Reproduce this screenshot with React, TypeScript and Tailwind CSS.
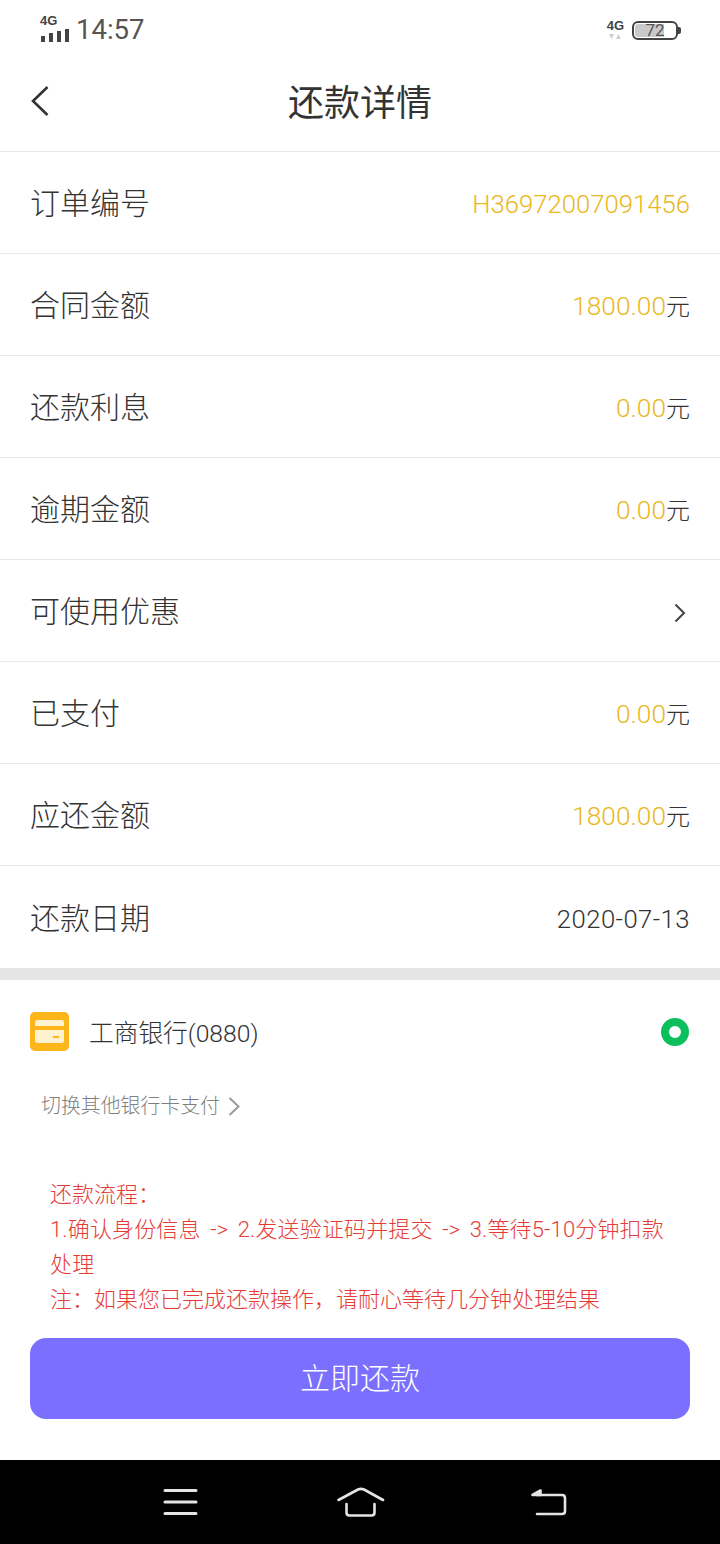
function Y({ children }: { children: React.ReactNode }) {
  return <span className="text-[#eab71a]">{children}</span>;
}
function Row({ label, children }: { label: string; children: React.ReactNode }) {
  return (
    <div className="h-[102px] shrink-0 border-b border-[#e8e8e8] last:border-b-0 flex items-center justify-between pl-[30px] pr-[30px]">
      <span className="text-[30px] text-[#333333] font-light translate-y-[1px]">{label}</span>
      <span className="text-[25.700px] text-[#333333] font-light translate-y-[2px]">{children}</span>
    </div>
  );
}
function Money({ v }: { v: string }) {
  return (
    <span className="flex items-baseline text-[26.300px]">
      <Y>{v}</Y>
      <span className="text-[24px] font-light">元</span>
    </span>
  );
}
export default function App() {
  return (
    <div className="w-[720px] h-[1544px] bg-white flex flex-col overflow-hidden font-['Roboto','Noto_Sans_CJK_SC',sans-serif]">
      <div className="h-[60px] shrink-0 flex items-center justify-between pl-[40px] pr-[39px]">
        <div className="flex items-center gap-[7px] text-[#444]">
          <div className="flex flex-col mt-[-3px]">
            <span className="text-[13px] leading-[12px] font-bold h-[11px] font-['Liberation_Sans',sans-serif]">4G</span>
            <div className="flex items-end gap-[4px] mt-[3px] ml-[1px]">
              <div className="w-[4px] h-[6px] bg-[#444]" />
              <div className="w-[4px] h-[9px] bg-[#444]" />
              <div className="w-[4px] h-[11px] bg-[#444]" />
              <div className="w-[4px] h-[13px] bg-[#444]" />
            </div>
          </div>
          <span className="text-[27.500px] font-normal leading-none text-[#555]">14:57</span>
        </div>
        <div className="flex items-center gap-[8px] text-[#444]">
          <div className="flex flex-col items-center mt-[-2px] ml-[1px]">
            <span className="text-[13px] leading-[13px] font-bold font-['Liberation_Sans',sans-serif]">4G</span>
            <svg width="14" height="7" viewBox="0 0 14 7" className="mt-[1px]"><path d="M1 1h5L3.500 6zM8 6h5l-2.500-5z" fill="#cfcfcf" /></svg>
          </div>
          <div className="flex items-center">
            <div className="w-[46px] h-[19px] rounded-[6px] border-2 border-[#444] p-[1px] relative flex">
              <div className="w-[29px] bg-[#c9c9c9] rounded-l-[3px]" />
              <span className="absolute inset-0 flex items-center justify-center text-[17px] font-normal leading-none text-[#555]">72</span>
            </div>
            <div className="w-[3px] h-[7px] bg-[#444] rounded-r-[2px]" />
          </div>
        </div>
      </div>
      <header className="h-[92px] shrink-0 relative flex items-center justify-center border-b border-[#e8e8e8] pb-[3px]">
        <svg className="absolute left-[30px] top-[25px]" width="20" height="32" viewBox="0 0 20 32" fill="none">
          <path d="M17.500 2 3 16l14.500 14" stroke="#333" strokeWidth="2.600" />
        </svg>
        <h1 className="text-[36px] font-normal text-[#333]">还款详情</h1>
      </header>
      <div className="flex flex-col">
        <Row label="订单编号"><Y>H36972007091456</Y></Row>
        <Row label="合同金额"><Money v="1800.00" /></Row>
        <Row label="还款利息"><Money v="0.00" /></Row>
        <Row label="逾期金额"><Money v="0.00" /></Row>
        <Row label="可使用优惠">
          <svg className="block mr-[4px]" width="12" height="20" viewBox="0 0 12 20" fill="none"><path d="M1.500 1.500 10 10l-8.500 8.500" stroke="#444" strokeWidth="2" /></svg>
        </Row>
        <Row label="已支付"><Money v="0.00" /></Row>
        <Row label="应还金额"><Money v="1800.00" /></Row>
        <Row label="还款日期"><span className="tracking-[0.45px]">2020-07-13</span></Row>
      </div>
      <div className="h-[12px] shrink-0 bg-[#e5e5e5]" />
      <div className="shrink-0 flex items-center pl-[30px] pr-[31px] mt-[32px]">
        <div className="w-[39px] h-[39px] rounded-[5px] bg-[#fcb61a] flex items-center justify-center">
          <svg width="29" height="23" viewBox="0 0 29 23">
            <rect x="0" y="0" width="29" height="23" rx="2.500" fill="#fff3cf" />
            <rect x="0" y="6" width="29" height="4" fill="#fcb61a" />
            <rect x="18" y="16" width="6" height="2" fill="#fcb61a" />
          </svg>
        </div>
        <span className="ml-[20px] text-[24.700px] font-light text-[#333] translate-y-[2px]">工商银行(0880)</span>
        <div className="ml-auto w-[28px] h-[28px] rounded-full border-[8px] border-[#0bbf5d]" />
      </div>
      <div className="flex items-center pl-[41px] h-[34px] mt-[39px] text-[#808080]">
        <span className="text-[19.900px] font-light">切换其他银行卡支付</span>
        <svg className="ml-[8px] mt-[-2px]" width="13" height="19" viewBox="0 0 13 19" fill="none"><path d="M1.500 1 10.500 9.500l-9 8.500" stroke="#999" strokeWidth="2" /></svg>
      </div>
      <div className="mt-[53px] pl-[50px] pr-[50px] text-[22px] font-light leading-[35px] text-[#e63c38]">
        <p>还款流程：</p>
        <p className="[word-spacing:4px] tracking-[0.15px]">1.确认身份信息 -&gt; 2.发送验证码并提交 -&gt; 3.等待5-10分钟扣款处理</p>
        <p>注：如果您已完成还款操作，请耐心等待几分钟处理结果</p>
      </div>
      <button className="mx-[30px] mt-[21px] h-[81px] shrink-0 rounded-[16px] bg-[#7b6fff] text-white text-[30px] font-light">立即还款</button>
      <div className="flex-1" />
      <nav className="h-[84px] shrink-0 bg-black flex items-center justify-between pl-[163px] pr-[153px]">
        <svg width="36" height="28" viewBox="0 0 36 28" fill="none" stroke="#e4e4e4" strokeWidth="3" strokeLinecap="round">
          <path d="M2 2.500h31M2 14h31M2 25.500h31" />
        </svg>
        <svg className="mr-[8px]" width="48" height="30" viewBox="0 0 48 30" fill="none" stroke="#e4e4e4" strokeWidth="2.600" strokeLinecap="round" strokeLinejoin="round">
          <path d="M1.500 13 21 2.500q3-1.300 6 0l19 10.500" />
          <path d="M9.500 17v8.500q0 3 3 3h22q3 0 3-3V17" />
        </svg>
        <svg width="36" height="28" viewBox="0 0 36 28" fill="none" stroke="#e4e4e4" strokeWidth="2.600" strokeLinecap="round" strokeLinejoin="round">
          <path d="M6 7h25q3 0 3 3v13q0 3-3 3H6" />
          <path d="M1.500 7 9.500 2.500V7z" fill="#e4e4e4" />
        </svg>
      </nav>
    </div>
  );
}
